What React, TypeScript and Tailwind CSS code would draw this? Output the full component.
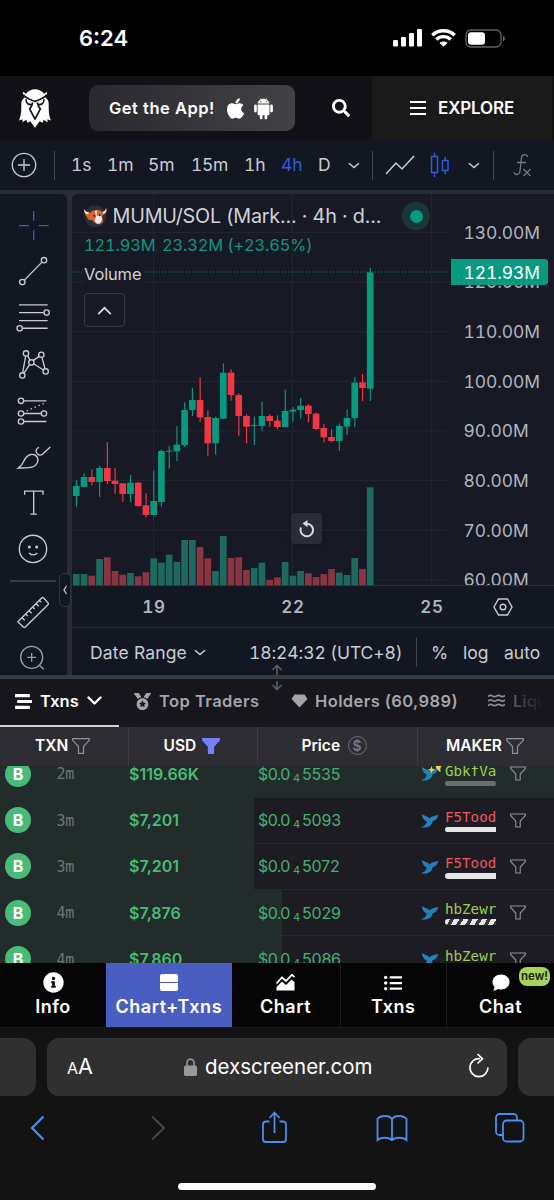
import React from "react";
import { AiFillAndroid, AiFillApple } from "react-icons/ai";
import { FaInfoCircle, FaListUl, FaMedal, FaSearch, FaStream } from "react-icons/fa";

type Candle = [up: number, high: number, top: number, bottom: number, low: number, volume: number];

const candles: Candle[] = [
  [1, 390, 408, 438, 470, 672], [1, 370, 381, 411, 411, 672], [0, 358, 381, 396, 406, 677],
  [1, 347, 354, 396, 441, 627], [0, 276, 354, 393, 402, 622], [0, 354, 392, 402, 431, 663],
  [0, 400, 400, 432, 456, 674], [1, 375, 398, 432, 456, 669], [0, 396, 398, 468, 471, 679],
  [0, 430, 466, 495, 502, 667], [1, 362, 453, 495, 495, 625], [1, 298, 303, 456, 470, 638],
  [1, 289, 302, 305, 356, 614], [1, 229, 284, 304, 333, 636], [1, 157, 180, 285, 291, 570],
  [1, 114, 150, 180, 198, 570], [0, 82, 150, 202, 216, 591], [0, 181, 201, 280, 318, 625],
  [1, 200, 204, 280, 314, 663], [1, 40, 68, 206, 208, 558], [0, 58, 68, 135, 152, 624],
  [0, 130, 135, 198, 257, 622], [0, 193, 198, 230, 280, 660], [1, 200, 225, 228, 285, 654],
  [1, 156, 198, 228, 242, 638], [0, 193, 198, 213, 230, 690], [0, 196, 212, 231, 238, 682],
  [1, 119, 183, 231, 231, 636], [1, 171, 179, 185, 215, 677], [1, 144, 167, 180, 206, 663],
  [0, 162, 167, 192, 217, 670], [0, 188, 191, 237, 240, 681], [0, 222, 234, 262, 277, 672],
  [0, 238, 261, 273, 277, 657], [1, 220, 228, 273, 303, 668], [1, 178, 204, 230, 255, 675],
  [1, 82, 98, 204, 232, 624], [0, 72, 97, 114, 153, 657], [1, -246, -233, 116, 153, 412],
];

function Chart() {
  return (
    <svg className="block h-[392px] w-[482px]" viewBox="0 -468 1446 1176">
      {[-353, -204, -55, 94, 243, 392, 541, 690].map((y) => (
        <path key={y} d={`M0 ${y}H1135`} stroke="#242731" strokeWidth="3" />
      ))}
      {[245, 661, 1079].map((x) => (
        <path key={x} d={`M${x} -468V706`} stroke="#242731" strokeWidth="3" />
      ))}
      {candles.map(([up, high, top, bottom, low, volume], i) => {
        const x = 13 + 23.2 * i;
        return (
          <g key={i}>
            <rect x={x - 10} y={volume} width="20" height={706 - volume} fill={up ? "#1e6a60" : "#8b3543"} />
            <rect x={x - 1.5} y={high} width="3.5" height={low - high} fill={up ? "#089981" : "#f23645"} />
            <rect x={x - 10} y={top} width="20" height={bottom - top} fill={up ? "#089981" : "#f23645"} />
          </g>
        );
      })}
      <path d="M0 -234H1135" stroke="#0c8f7b" strokeWidth="3" strokeDasharray="3 6" />
    </svg>
  );
}

function Tool({ y, color = "#c9ccd4", children }: { y: number; color?: string; children: React.ReactNode }) {
  return (
    <svg className="block h-[46.2px] w-[46px] shrink-0" viewBox={`31 ${y} 138 138.6`} fill="none" stroke={color} strokeWidth="4">
      {children}
    </svg>
  );
}

function Sidebar() {
  return (
    <div className="flex h-[481px] w-[67px] shrink-0 flex-col overflow-hidden rounded-tr-md bg-[#131722] pt-[9px] pl-[10px]">
      <Tool y={54} color="#2f5be0">
        <path d="M102 78v29M102 136v29M58 122h30M117 122h30" />
      </Tool>
      <Tool y={192.6}>
        <circle cx="133" cy="226" r="8" /><circle cx="68" cy="292" r="8" /><path d="M74 286l53-54" />
      </Tool>
      <Tool y={331.2}>
        <path d="M58 361h86M58 384h75M58 408h86M68 431h76" /><circle cx="141" cy="384" r="8" /><circle cx="60" cy="431" r="8" />
      </Tool>
      <Tool y={469.8}>
        <circle cx="79" cy="504" r="8" /><circle cx="125" cy="508" r="8" /><circle cx="95" cy="531" r="8" /><circle cx="138" cy="558" r="8" /><circle cx="68" cy="570" r="8" />
        <path d="M78 512l-9 50M84 511l7 13M101 525l18-12M127 516l9 34M102 535l29 19M90 538l-17 25" />
      </Tool>
      <Tool y={608.4}>
        <circle cx="64" cy="647" r="8" /><circle cx="64" cy="685" r="8" /><circle cx="133" cy="685" r="8" /><circle cx="64" cy="709" r="8" />
        <path d="M72 647h68M72 685h53M72 709h68" /><path d="M81 677l56-24" strokeDasharray="4 9" />
      </Tool>
      <Tool y={12}>
        <path d="M56 114c14-8 14-20 22-30 10-14 28-14 35-2 6 12-2 24-14 29-12 4-28 3-43 3zM118 52c-9 3-11 12-6 18 5 7 12 7 18 1l22-20" />
      </Tool>
      <Tool y={150.6}>
        <path d="M75 195v-11h55v11M102 184v69M92 253h20" />
      </Tool>
      <Tool y={289.2}>
        <circle cx="100" cy="358" r="41" /><circle cx="89" cy="352" r="2.5" fill="#c9ccd4" /><circle cx="111" cy="352" r="2.5" fill="#c9ccd4" /><path d="M88 370c6 8 19 8 25 0" />
      </Tool>
      <div className="mt-[7px] mb-[7.5px] h-[2px] w-[46px] shrink-0 bg-[#363a45]" />
      <Tool y={477}>
        <path d="M56 574l70-70c2-2 4-2 6 0l13 14c2 2 2 4 0 6l-68 67c-2 2-4 2-6 0l-15-14c-2-1-2-2 0-3zM67 563l8 8M78 552l6 6M88 542l8 8M99 531l6 6M109 521l8 8M119 511l6 6" />
      </Tool>
      <Tool y={614} color="#9a9da7">
        <circle cx="96" cy="681" r="33" /><path d="M96 668v26M83 681h26M118 704l14 13" />
      </Tool>
    </div>
  );
}

function Chevron({ className = "" }: { className?: string }) {
  return (
    <svg className={`h-[7px] w-[12px] shrink-0 ${className}`} viewBox="0 0 12 7" fill="none" stroke="#c9ccd4" strokeWidth="1.5">
      <path d="M1 1.2l5 4.3 5-4.3" />
    </svg>
  );
}

function Funnel({ filled = false, className = "" }: { filled?: boolean; className?: string }) {
  return (
    <svg className={`shrink-0 ${className}`} viewBox="0 0 18 16" fill={filled ? "#7483fb" : "none"} stroke={filled ? "#7483fb" : "#929298"} strokeWidth="1.2">
      <path d="M.7.7h16.6v1.6L11.500 8.600v6.700h-5V8.600L.7 2.300z" />
    </svg>
  );
}

const txns = [
  { age: "2m", usd: "$119.66K", price: "5535", maker: "GbkfVa", tone: "text-[#a0cf55]", fill: "w-[554px]", bar: "gray", sparkle: true },
  { age: "3m", usd: "$7,201", price: "5093", maker: "F5Tood", tone: "text-[#ee5566]", fill: "w-[254px]", bar: "white", sparkle: false },
  { age: "3m", usd: "$7,201", price: "5072", maker: "F5Tood", tone: "text-[#ee5566]", fill: "w-[254px]", bar: "white", sparkle: false },
  { age: "4m", usd: "$7,876", price: "5029", maker: "hbZewr", tone: "text-[#a0cf55]", fill: "w-[282px]", bar: "striped", sparkle: false },
  { age: "4m", usd: "$7,860", price: "5086", maker: "hbZewr", tone: "text-[#a0cf55]", fill: "w-[282px]", bar: "striped", sparkle: false },
];

const bars: Record<string, string> = {
  gray: "rounded-full bg-[#6c6f6f]",
  white: "rounded-l-full bg-[#e6e6e8]",
  striped: "rounded-l-full bg-[repeating-linear-gradient(120deg,#e8e8e8_0px,#e8e8e8_4.5px,#3a3a3e_4.5px,#3a3a3e_8px)]",
};

function Row({ t }: { t: (typeof txns)[number] }) {
  return (
    <div className="relative flex h-[46.3px] shrink-0 items-center border-b border-[#27272d]">
      <div className={`absolute inset-y-0 left-0 -mb-px bg-[#222c2b] ${t.fill}`} />
      <div className="relative flex items-center">
        <div className="ml-[5px] flex size-[26px] items-center justify-center rounded-full bg-[#48bb78] text-[16px] font-bold text-white">B</div>
        <div className="ml-[25.500px] w-[72.500px] pt-[2px] font-['DejaVu_Sans_Mono',monospace] text-[15px] tracking-[-0.3px] text-[#6f7576]">{t.age}</div>
        <div className="w-[129px] text-[16px] font-semibold text-[#48bb78]">{t.usd}</div>
        <div className="flex w-[163px] items-center text-[16px] text-[#45b074]">
          <span className="w-[35px] tracking-[-0.6px]">$0.0</span>
          <span className="mt-[9px] w-[9px] text-[11px]">4</span>
          <span className="tracking-[-0.2px]">{t.price}</span>
        </div>
        <svg className="h-[15px] w-[17px] overflow-visible" viewBox="431 248 50 44">
          <path d="M433 250C440 257 450 256 457 264C463 255 472 258 482 253C480 264 473 271 465 272C465 284 450 294 431 290C440 287 447 282 448 273C440 270 434 262 433 250z" fill="#2580b8" />
          {t.sparkle && <path d="M470 240h26l-8 14v12l-5-3-7-9zM462 248l3 8 8 3-8 3-3 8-3-8-8-3 8-3z" fill="#f5d63d" />}
        </svg>
        <div className="ml-[7px] flex w-[51px] flex-col gap-[1px]">
          <span className={`font-['DejaVu_Sans_Mono',monospace] text-[14.200px] leading-[18px] ${t.tone}`}>{t.maker}</span>
          <span className={`h-[5.5px] w-[51px] ${bars[t.bar]}`} />
        </div>
        <Funnel className="ml-[14px] h-[15px] w-[16px]" />
      </div>
    </div>
  );
}

function NavItem({ label, icon, className }: { label: string; icon: React.ReactNode; className: string }) {
  return (
    <div className={`flex h-[64px] flex-col items-center pt-[9px] text-[18px] font-semibold tracking-[0.55px] text-white ${className}`}>
      <div className="flex h-[21px] items-center">{icon}</div>
      <div className="mt-[3px] leading-[21px]">{label}</div>
    </div>
  );
}

function Header() {
  return (
    <div className="flex h-[64px] items-center bg-[#121117] text-white">
      <svg className="ml-[19px] h-[39px] w-[32px] shrink-0" viewBox="57 272 96 116">
        <path fill="#fff" d="M68 280l10 6c12-18 42-18 54 0l10-6c-1 8-4 13-6 18 7 4 10 10 10 18 0 20 0 34 7 50l-11-4 1 9-12-7-3 9-9-5-14 20-14-20-9 5-3-9-12 7 1-9-11 4c7-16 7-30 7-50 0-8 3-14 10-18-2-5-5-10-6-18z" />
        <path fill="none" stroke="#121117" strokeWidth="5" strokeLinejoin="round" d="M70 289c8 11 20 14 35 20 15-6 27-9 35-20M78 302c0 14 8 17 19 16M132 302c0 14-8 17-19 16M98 312c-2 10-5 15-9 19l16 31 16-31c-4-4-7-9-9-19" />
      </svg>
      <div className="ml-[38px] flex h-[46px] w-[206px] items-center rounded-[9px] bg-linear-to-r from-[#29282e] to-[#434247] pl-[20px] text-[16.500px] font-semibold">
        <span className="w-[114px] tracking-[0.5px] whitespace-nowrap">Get the App!</span>
        <AiFillApple className="size-[25px]" />
        <AiFillAndroid className="ml-[3px] size-[25px]" />
      </div>
      <FaSearch className="ml-[37px] size-[18px]" />
      <div className="ml-[22px] flex h-full w-[180px] items-center bg-[#1a1a1a] pl-[38px]">
        <div className="flex w-[28px] flex-col gap-[3.5px]">
          <i className="h-[2.5px] w-[16px] bg-white" /><i className="h-[2.5px] w-[16px] bg-white" /><i className="h-[2.5px] w-[16px] bg-white" />
        </div>
        <span className="text-[17px] font-semibold tracking-[-0.150px]">EXPLORE</span>
      </div>
    </div>
  );
}

const line = "h-[29px] w-px shrink-0 bg-[#434651]";

function Toolbar() {
  return (
    <div className="flex h-[50px] items-center bg-[#131722] text-[17.500px] text-[#c9ccd4] tabular-nums">
      <svg className="ml-[11px] size-[26px]" viewBox="0 0 26 26" fill="none" stroke="#c9ccd4" strokeWidth="1.3"><circle cx="13" cy="13" r="11.700" /><path d="M13 7v12M7 13h12" /></svg>
      <div className={`ml-[17px] mr-[16px] ${line}`} />
      <span className="w-[36px]">1s</span>
      <span className="w-[41px]">1m</span>
      <span className="w-[43px]">5m</span>
      <span className="w-[53px] tracking-[-0.3px]">15m</span>
      <span className="w-[37px]">1h</span>
      <span className="w-[37px] text-[#2f5be0]">4h</span>
      <span className="w-[30px]">D</span>
      <Chevron />
      <div className={`ml-[12px] ${line}`} />
      <svg className="ml-[12px] h-[20px] w-[30px]" viewBox="0 0 30 20" fill="none" stroke="#c9ccd4" strokeWidth="1.5"><path d="M1 19l10-11 6 6L29 1" /></svg>
      <svg className="ml-[15px] h-[26px] w-[20px]" viewBox="0 0 20 26" fill="none" stroke="#2f5be0" strokeWidth="1.5"><path d="M1.500 4.500h6v16h-6zM4.500.5v4M4.500 20.500v4.500M12.500 8.500h5.500v10h-5.500zM15.200 5v3.500M15.200 18.500v4" /></svg>
      <Chevron className="ml-[18px]" />
      <div className={`ml-[13px] ${line}`} />
      <svg className="ml-[19px] h-[24px] w-[20px]" viewBox="0 0 20 24" fill="none" stroke="#757984" strokeWidth="1.300"><path d="M14.500 4c0-3-5.500-3.500-6 .5L7 18c-.4 4-5.500 5-6 1M4 9.500h9M10.500 16l7 7M17.500 16l-7 7" /></svg>
    </div>
  );
}

function ChartPanel() {
  return (
    <div className="ml-[5px] w-[482px] overflow-hidden rounded-tl-md bg-[#131722]">
      <div className="relative h-[392px] border-b border-[#2a2e39] bg-[#171a25]">
        <Chart />
        <div className="absolute top-[8px] left-[12px] flex flex-col text-[#cfd1d8]">
          <div className="flex h-[28px] items-center">
            <svg className="size-[23px]" viewBox="0 0 69 69">
              <circle cx="34" cy="34" r="33" fill="#2a2e39" />
              <path d="M2 12c2 10 8 12 16 11 8-10 26-12 36-3 7 0 11-4 12-11 4 9 1 18-8 20l-4 8c6 8 4 17-5 20-9 3-20-3-24-12-9 2-15-2-16-10C3 31-1 22 2 12z" fill="#d4642b" />
              <path d="M33 18l6-1-1 16 10-4 6 8c1 8-2 16-9 19-7 1-11-3-13-10l4-10z" fill="#eee9e6" />
              <path d="M2 12c1 7 6 9 13 10l-2 6C4 27-1 22 2 12zM66 9c0 7-4 10-10 12l2 6c8-3 11-9 8-18z" fill="#eee9e6" />
              <circle cx="31" cy="32" r="3" fill="#222" /><circle cx="47" cy="31" r="3" fill="#222" />
            </svg>
            <span className="ml-[5.500px] w-[289.500px] pt-[1px] text-[19.800px] tracking-[-0.220px] whitespace-nowrap">MUMU/SOL (Mark... · 4h · d...</span>
            <span className="flex size-[28px] items-center justify-center rounded-full bg-[#1b3638]"><i className="size-[13px] rounded-full bg-[#089981]" /></span>
          </div>
          <div className="mt-[5px] flex h-[20px] items-center text-[16.500px] tracking-[-0.2px] text-[#109580] tabular-nums">
            <span className="w-[78px]">121.93M</span><span className="whitespace-nowrap">23.32M (+23.65%)</span>
          </div>
          <div className="mt-[9px] flex h-[20px] items-center self-start bg-[#171a25] pr-[2px] text-[16.500px] tracking-[-0.150px]">Volume</div>
          <div className="mt-[9px] flex h-[34px] w-[41px] items-center justify-center rounded-[4px] border border-[#363a45] bg-[#171a25]">
            <svg className="h-[9px] w-[15px]" viewBox="0 0 16 10" fill="none" stroke="#d6d8de" strokeWidth="2"><path d="M1 9l7-7 7 7" /></svg>
          </div>
        </div>
        <div className="absolute top-0 right-0 h-[391px] w-[103px] overflow-hidden pt-[13.500px] text-[17.400px] tracking-[-0.050px] text-[#b2b5be] tabular-nums">
          {["130.00M", "120.00M", "110.00M", "100.00M", "90.00M", "80.00M", "70.00M", "60.00M"].map((p) => (
            <div key={p} className="flex h-[49.700px] items-start pl-[12.500px] leading-[50px]"><span>{p}</span></div>
          ))}
          <div className="absolute top-[65px] left-0 flex h-[26px] w-[96.500px] items-center rounded-r-[3px] bg-[#089981] pt-[1px] pl-[12.500px] text-white">121.93M</div>
        </div>
        <div className="absolute top-[319px] left-[219px] flex size-[31px] items-center justify-center rounded-[4px] bg-[#2a2c38] shadow-md">
          <svg className="size-[18px]" viewBox="0 0 18 18" fill="none" stroke="#d6d8de" strokeWidth="2"><path d="M3 7.500a6.300 6.300 0 1 0 6-3.800H6" /><path d="M9.500 0v7.200L4.500 3.600z" fill="#d6d8de" stroke="none" /></svg>
        </div>
      </div>
      <div className="flex h-[42px] items-center border-b border-[#2a2e39] text-[17px] font-semibold text-[#b2b5be] tabular-nums">
        <span className="ml-[52px] w-[60px] pt-[2px] text-center tracking-[0.8px]">19</span>
        <span className="ml-[79px] w-[60px] pt-[2px] text-center tracking-[0.8px]">22</span>
        <span className="ml-[79px] w-[60px] pt-[2px] text-center tracking-[0.8px]">25</span>
        <svg className="ml-[31px] h-[18px] w-[20px]" viewBox="0 0 20 18" fill="none" stroke="#c9ccd4" strokeWidth="1.400"><path d="M5.500 1h9L19 9l-4.500 8h-9L1 9z" /><circle cx="10" cy="9" r="2.800" /></svg>
      </div>
      <div className="flex h-[47px] items-center pt-[2px] text-[17.500px] whitespace-nowrap text-[#c9ccd4]">
        <span className="ml-[18px] w-[104px] tracking-[0.150px]">Date Range</span>
        <Chevron />
        <span className="ml-[43px] w-[167px] tracking-[-0.100px] tabular-nums">18:24:32 (UTC+8)</span>
        <div className={line} />
        <span className="ml-[14px] w-[32px]">%</span>
        <span className="w-[41px]">log</span>
        <span>auto</span>
      </div>
    </div>
  );
}

function Tabs() {
  return (
    <div className="relative flex h-[48px] items-center bg-[#17161c] pb-[4px] text-[16.500px] font-semibold whitespace-nowrap text-[#a5a4a8]">
      <FaStream className="ml-[15px] size-[17px] text-white" />
      <span className="ml-[8px] w-[47px] text-white">Txns</span>
      <svg className="h-[10px] w-[15px]" viewBox="0 0 15 10" fill="none" stroke="#fff" strokeWidth="2.400" strokeLinecap="round" strokeLinejoin="round"><path d="M1.500 1.500l6 6 6-6" /></svg>
      <FaMedal className="ml-[32px] size-[17px]" />
      <span className="ml-[8px] w-[132px] tracking-[0.450px]">Top Traders</span>
      <svg className="h-[14px] w-[17px]" viewBox="0 0 17 14" fill="#a5a4a8"><path d="M3.500.5h10L16.500 5l-8 8.500-8-8.500z" /></svg>
      <span className="ml-[7px] w-[173px] tracking-[0.4px]">Holders (60,989)</span>
      <svg className="h-[14px] w-[17px] shrink-0" viewBox="0 0 17 14" fill="none" stroke="#8f8e93" strokeWidth="1.700"><path d="M0 2.500c2-1.500 3-1.500 4.500-.5s2.500 1 4 0 2.500-1 4 0 2.500 1 4.500-.5M0 7c2-1.500 3-1.500 4.500-.5s2.500 1 4 0 2.500-1 4 0 2.500 1 4.500-.5M0 11.500c2-1.500 3-1.500 4.500-.5s2.500 1 4 0 2.500-1 4 0 2.500 1 4.500-.5" /></svg>
      <span className="ml-[8px] w-[41px] overflow-hidden bg-linear-to-r from-[#5a595e] to-[#17161c] to-75% bg-clip-text leading-[22px] text-transparent">Liquidity</span>
      <div className="absolute bottom-0 left-0 h-[2.500px] w-[119px] bg-[#d0cfd2]" />
      <svg className="absolute top-[-15px] left-[271px] h-[27px] w-[12px]" viewBox="0 0 12 27" fill="none" stroke="#5f626b" strokeWidth="1.500"><path d="M6 11V1.500M1.500 6L6 1.500 10.500 6M6 17v8.500M1.500 21L6 25.500 10.500 21" /></svg>
    </div>
  );
}

function Table() {
  return (
    <>
      <div className="flex h-[39px] items-center bg-[#2e2d33] text-[15.500px] font-semibold text-white">
        <div className="flex h-full w-[128.500px] items-center border-r border-[#3b3a40] pb-[2px] pl-[35px]"><span className="w-[37px]">TXN</span><Funnel className="h-[16px] w-[18px]" /></div>
        <div className="flex h-full w-[129px] items-center border-r border-[#3b3a40] pb-[2px] pl-[35px]"><span className="w-[38px]">USD</span><Funnel filled className="h-[16px] w-[18px]" /></div>
        <div className="flex h-full w-[160.500px] items-center border-r border-[#3b3a40] pb-[2px] pl-[44px]"><span className="w-[46px]">Price</span><span className="flex size-[19px] items-center justify-center rounded-full border-[1.500px] border-[#6c6b71] text-[14px] text-[#77767c]">$</span></div>
        <div className="flex h-full items-center pb-[2px] pl-[28px]"><span className="w-[60px]">MAKER</span><Funnel className="h-[16px] w-[18px]" /></div>
      </div>
      <div className="flex h-[197px] flex-col overflow-hidden bg-[#1d1c23]">
        <div className="-mt-[14.800px] flex flex-col">
          {txns.map((t, i) => <Row key={i} t={t} />)}
        </div>
      </div>
    </>
  );
}

function BottomNav() {
  return (
    <div className="relative flex h-[65px] border-b border-[#1c1c1c] bg-[#050505]">
      <NavItem label="Info" className="w-[106px]" icon={<FaInfoCircle className="size-[21px]" />} />
      <NavItem label="Chart+Txns" className="w-[125.500px] bg-[#4a5dc0]" icon={<div className="flex flex-col gap-[1.500px]"><i className="h-[8px] w-[18px] rounded-t-[2px] bg-white" /><i className="h-[8px] w-[18px] rounded-b-[2px] bg-white" /></div>} />
      <NavItem label="Chart" className="w-[109px] border-r border-[#1c1c1c]" icon={<svg className="h-[18px] w-[19px]" viewBox="0 0 19 18"><path d="M.5 9.500L6 3.500l4 3.500 6-6.300 2.500 2.500" fill="none" stroke="#fff" strokeWidth="1.800" /><path d="M.5 13L6 7.500l4 3.500 5.500-5.500 3 2.500v8.500H.5z" fill="#fff" /></svg>} />
      <NavItem label="Txns" className="w-[106.500px] border-r border-[#1c1c1c]" icon={<FaListUl className="size-[18px]" />} />
      <NavItem label="Chat" className="w-[107px]" icon={<svg className="h-[17px] w-[18px]" viewBox="0 0 18 17" fill="#fff"><path d="M9 .5c5 0 8.500 3.300 8.500 7.500S14 15.500 9 15.500c-1 0-2-.1-3-.5-1.500 1-3.500 1.500-5 1.500 1-1 1.500-2.500 1.300-4C1.200 11.200.5 9.700.5 8 .5 3.800 4 .5 9 .5z" /></svg>} />
      <div className="absolute top-[4px] right-[4px] flex h-[19px] w-[31px] items-center justify-center rounded-[8px] bg-[#a5d35b] text-[11.500px] font-semibold text-[#14200a]">new!</div>
    </div>
  );
}

function Browser() {
  const s = { fill: "none", stroke: "#4b8ef0", strokeWidth: 1.8 };
  return (
    <div className="h-[172px] bg-[#131313] pt-[9.500px]">
      <div className="flex h-[58px] justify-between">
        <div className="w-[36px] rounded-r-[13px] bg-[#303030]" />
        <div className="flex w-[460px] items-center rounded-[12px] bg-[#303030] pt-[1px] text-white">
          <span className="ml-[20px] w-[117px] text-[16px]">A<span className="text-[21.500px]">A</span></span>
          <svg className="h-[18px] w-[13px]" viewBox="0 0 13 18" fill="none"><rect y="7.500" width="13" height="10.500" rx="1.800" fill="#99989e" /><path d="M3 8V5c0-5 7-5 7 0v3" stroke="#99989e" strokeWidth="1.500" /></svg>
          <span className="ml-[8px] w-[263px] pt-[1px] text-[20.500px]">dexscreener.com</span>
          <svg className="mb-[4px] h-[25px] w-[22px]" viewBox="0 0 22 25" fill="none" stroke="#fff" strokeWidth="1.700"><path d="M12 5.700a9 9 0 1 0 7.900 8.800M9.500 1l5 4.700-5 4.800" /></svg>
        </div>
        <div className="w-[36px] rounded-l-[13px] bg-[#303030]" />
      </div>
      <div className="flex h-[64px] items-center pl-[29px]">
        <svg className="h-[26px] w-[16px]" viewBox="0 0 16 26" {...s} strokeWidth="2.200"><path d="M14.500 1.500L3 13l11.500 11.500" /></svg>
        <svg className="ml-[105px] h-[26px] w-[16px]" viewBox="0 0 16 26" {...s} stroke="#48484a"><path d="M2 1.500L14 13 2 24.500" /></svg>
        <svg className="ml-[95px] h-[33px] w-[27px]" viewBox="0 0 27 33" {...s}><path d="M8.500 10.500H5a3 3 0 0 0-3 3V28a3 3 0 0 0 3 3h17a3 3 0 0 0 3-3V13.500a3 3 0 0 0-3-3h-3.500M13.500 22V2M8.500 7l5-5.500 5 5.500" /></svg>
        <svg className="ml-[88px] h-[28px] w-[32px]" viewBox="0 0 32 28" {...s}><path d="M16 5C13.500 1 4.500 1 1.500 5v21c3-3 11.500-3 14.500 0 3-3 11.500-3 14.500 0V5C27.500 1 18.500 1 16 5zM16 5v21" /></svg>
        <svg className="ml-[86px] h-[31px] w-[31px]" viewBox="0 0 31 31" {...s}><rect x="9" y="8.500" width="20.500" height="21" rx="3.500" /><path d="M9 23H5.500A3.500 3.500 0 0 1 2 19.500V5.500A3.500 3.500 0 0 1 5.500 2h14A3.500 3.500 0 0 1 23 5.500v3" /></svg>
      </div>
      <div className="mx-auto mt-[23.500px] h-[6.500px] w-[198px] rounded-full bg-white" />
    </div>
  );
}

export default function App() {
  return (
    <div className="flex h-[1200px] w-[554px] flex-col overflow-hidden bg-black font-['Inter','Liberation_Sans',sans-serif] leading-none">
      <div className="flex h-[76px] items-center text-white">
        <span className="ml-[79px] w-[314px] text-[22px] font-semibold">6:24</span>
        <svg className="h-[18px] w-[29px]" viewBox="0 0 29 18" fill="#fff"><rect y="11" width="5" height="6.500" rx="1.200" /><rect x="8" y="8" width="5" height="9.500" rx="1.200" /><rect x="16" y="4" width="5" height="13.500" rx="1.200" /><rect x="24" width="5" height="17.500" rx="1.200" /></svg>
        <svg className="ml-[9px] h-[18px] w-[25px]" viewBox="0 0 25 18" fill="none" stroke="#fff" strokeWidth="3.400"><path d="M1.300 6.300c6-6 16.400-6 22.400 0M5.300 10.500c4-3.900 10.400-3.900 14.400 0" /><path d="M12.500 17.800L8.500 14c2-2 6-2 8 0z" fill="#fff" stroke="none" /></svg>
        <svg className="ml-[9px] h-[19px] w-[41px]" viewBox="0 0 41 19" fill="none"><rect x="1" y="1" width="35" height="17" rx="5" stroke="#646464" strokeWidth="1.300" /><rect x="3" y="3.200" width="17" height="12.600" rx="3.200" fill="#fff" /><path d="M38 6.500c2.500 1 2.500 5 0 6z" fill="#646464" /></svg>
      </div>
      <Header />
      <Toolbar />
      <div className="relative flex h-[485px] bg-[#2a2c36] pt-[4px]">
        <Sidebar />
        <ChartPanel />
        <div className="absolute top-[382.500px] left-[59px] flex h-[34px] w-[12px] items-center justify-center rounded-[5px] border border-[#2f333e] bg-[#131722]">
          <svg className="h-3 w-2 shrink-0" viewBox="0 0 8 12" fill="none" stroke="#c9ccd4" strokeWidth="1.3"><path d="M5.500 2L3 6l2.500 4" /></svg>
        </div>
      </div>
      <div className="h-[4px] bg-[#3a3b43]" />
      <Tabs />
      <Table />
      <BottomNav />
      <Browser />
    </div>
  );
}
